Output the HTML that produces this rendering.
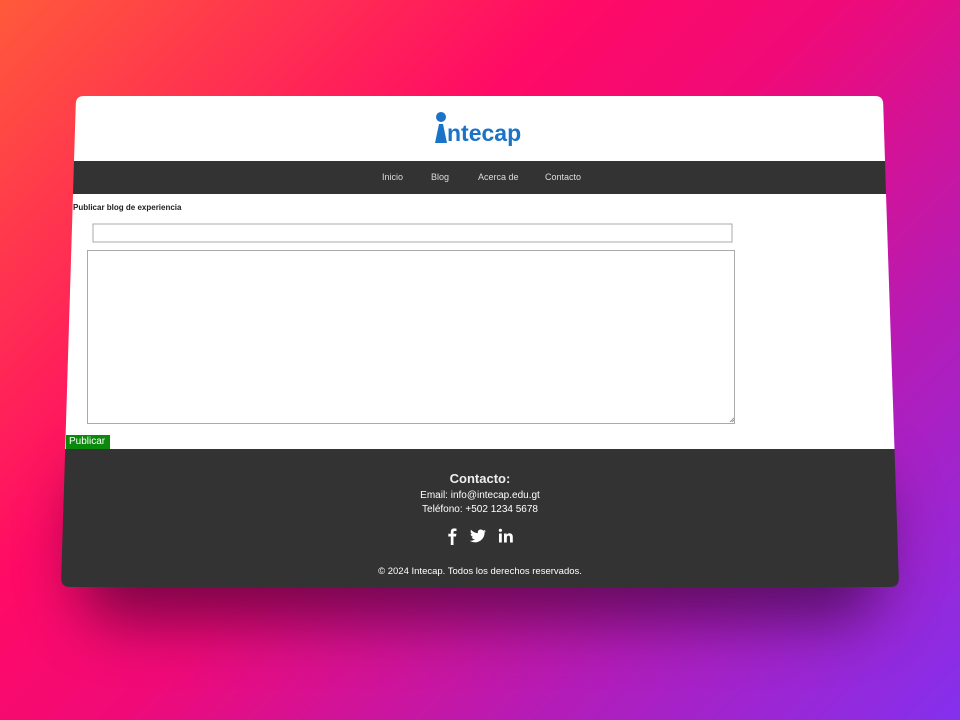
<!DOCTYPE html>
<html><head><meta charset="utf-8"><style>
body{margin:0;width:960px;height:720px;overflow:hidden;position:relative;font-family:"Liberation Sans",Arial,sans-serif;
background:linear-gradient(135deg,#ff5a3a 0%,#ff0a66 35%,#f00a78 50%,#b41cb8 75%,#8430ee 100%);}
.a{position:absolute}
.sh{left:80px;top:470px;width:800px;height:150px;background:rgba(40,0,40,.6);filter:blur(30px);border-radius:40px}
.t{color:#fff;white-space:nowrap}
</style></head><body>
<div class="a sh"></div>
<svg class="a" style="left:0;top:0" width="960" height="720">
<path d="M84 96 L875 96 Q883 96 883.2 104 L885 161 L74 161 L75.8 104 Q76 96 84 96Z" fill="#fff"/>
<path d="M74 161 L885 161 L886 194 L73 194Z" fill="#333"/>
<path d="M73 194 L886 194 L894.5 449 L65.2 449Z" fill="#fff"/>
<path d="M65.2 449 L894.5 449 L898.8 578 Q899 587 890 587 L70 587 Q61 587 61.2 578Z" fill="#333"/>
<rect x="93" y="224" width="639" height="18" fill="#fff" stroke="#aaa"/>
<rect x="87.5" y="250.5" width="647" height="173" fill="#fff" stroke="#aaa"/>
<path d="M730 422 L734 418 M732 422 L734 420" stroke="#999"/>
<rect x="66" y="435" width="44" height="14" fill="#0a8a0a"/>
<circle cx="441" cy="117" r="5" fill="#1a73c6"/>
<path d="M439 124 L443 124 L447 143 L435 143Z" fill="#1a73c6"/>
</svg>
<div class="a" style="left:447px;top:120px;font-size:23px;font-weight:bold;color:#1a73c6">ntecap</div>
<div class="a t" style="left:382px;top:172px;font-size:9px;color:#ddd">Inicio</div>
<div class="a t" style="left:431px;top:172px;font-size:9px;color:#ddd">Blog</div>
<div class="a t" style="left:478px;top:172px;font-size:9px;color:#ddd">Acerca de</div>
<div class="a t" style="left:545px;top:172px;font-size:9px;color:#ddd">Contacto</div>
<div class="a t" style="left:73px;top:203px;font-size:8px;font-weight:bold;color:#222">Publicar blog de experiencia</div>
<div class="a t" style="left:69px;top:436px;font-size:10px;color:#fff">Publicar</div>
<div class="a t" style="left:380px;top:471px;width:200px;text-align:center;font-size:13px;font-weight:bold;color:#eee">Contacto:</div>
<div class="a t" style="left:380px;top:490px;width:200px;text-align:center;font-size:10px">Email: info@intecap.edu.gt</div>
<div class="a t" style="left:380px;top:504px;width:200px;text-align:center;font-size:10px">Teléfono: +502 1234 5678</div>
<svg class="a" style="left:440px;top:526px" width="80" height="20" fill="#fff">
<path d="M13.5 19 V10.5 H16 L16.4 7.8 H13.5 V6.2 Q13.5 5 14.8 5 H16.5 V2.6 Q15.5 2.4 14.2 2.4 Q10.8 2.4 10.8 6 V7.8 H8.3 V10.5 H10.8 V19Z"/>
<path d="M46 5 Q45 5.5 44 5.6 Q45 5 45.4 3.8 Q44.4 4.4 43.3 4.6 Q42 3.3 40.3 3.5 Q37.5 4 37.8 7.2 Q33.7 7 31 3.8 Q29.8 6.3 32 8.2 Q31.2 8.2 30.6 7.8 Q30.7 10.3 33.2 11 Q32.4 11.2 31.7 11 Q32.4 13.2 34.8 13.4 Q32.5 15.2 29.6 14.8 Q35.5 18.3 41 14.3 Q44.8 11 44.6 6.4 Q45.5 5.8 46 5Z"/>
<rect x="59" y="7.5" width="2.8" height="9"/><circle cx="60.4" cy="4.3" r="1.6"/>
<path d="M64 7.5 H66.6 V8.8 Q67.6 7.2 69.5 7.2 Q72.8 7.2 72.8 11 V16.5 H70 V11.6 Q70 9.6 68.5 9.6 Q66.8 9.6 66.8 11.8 V16.5 H64Z"/>
</svg>
<div class="a t" style="left:330px;top:566px;width:300px;text-align:center;font-size:9.5px">© 2024 Intecap. Todos los derechos reservados.</div>
</body></html>
